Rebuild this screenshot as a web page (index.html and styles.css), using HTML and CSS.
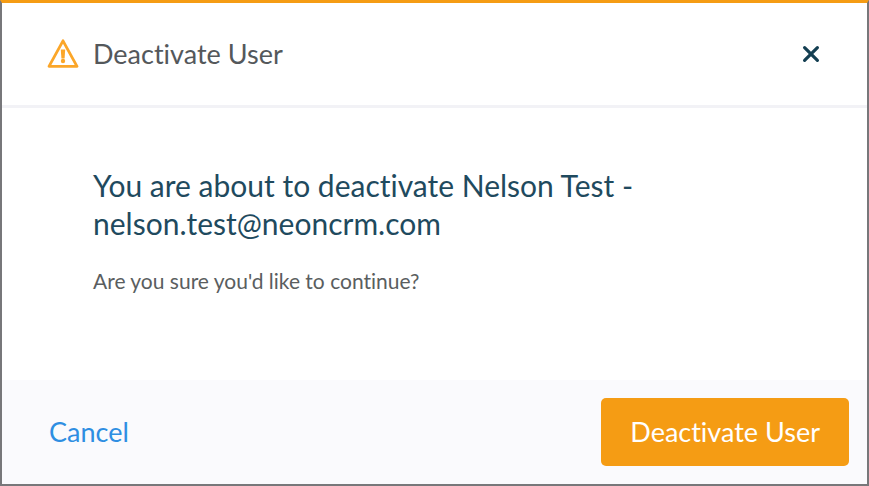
FILE: index.html
```html
<!DOCTYPE html>
<html lang="en">
<head>
<meta charset="utf-8">
<title>Deactivate User</title>
<link rel="stylesheet" href="styles.css">
</head>
<body>
<section class="dialog" role="dialog" aria-labelledby="title">
  <header class="header">
    <svg class="warning" viewBox="0 0 32 30" aria-hidden="true"><path d="M16 1.8 30 27.3H2Z" fill="none" stroke="#fba629" stroke-width="2.8" stroke-linejoin="round"/><path d="M13.8 10.5h4.4l-.6 9h-3.2Z" fill="#fba629"/><circle cx="16" cy="22" r="2.2" fill="#fba629"/></svg>
    <h1 class="title" id="title">Deactivate User</h1>
    <button class="close" type="button" aria-label="Close"><svg viewBox="0 0 18 18"><path d="M2.6 2.6l12.800 12.800M15.400 2.600L2.600 15.400" stroke="#143f52" stroke-width="3.2" stroke-linecap="round"/></svg></button>
  </header>
  <main class="body">
    <h2 class="message">You are about to deactivate Nelson Test - nelson.test@neoncrm.com</h2>
    <p class="question">Are you sure you'd like to continue?</p>
  </main>
  <footer class="footer">
    <button class="cancel" type="button">Cancel</button>
    <button class="confirm" type="button">Deactivate User</button>
  </footer>
</section>
</body>
</html>
```
FILE: styles.css
```css
* { box-sizing: border-box; }
body {
  margin: 0;
  font-family: Lato, "Liberation Sans", sans-serif;
  font-variant-ligatures: none;
}
.dialog {
  display: flex;
  flex-direction: column;
  min-height: 100vh;
  background: #fff;
  border: 2px solid #77777a;
  border-top: 3px solid #f59c14;
}
.header {
  display: flex;
  align-items: center;
  gap: 14px;
  padding: 31px 47px 31px 45px;
  border-bottom: 3px solid #f2f2f6;
}
.warning { width: 32px; height: 30px; }
.title { margin: 0; flex: 1; font-size: 27px; line-height: 40px; font-weight: 400; color: #54585b; }
.close { display: flex; padding: 0; border: 0; background: none; }
.close svg { width: 18px; height: 18px; }
.body { flex: 1; padding: 58px 91px 40px; }
.message { margin: 0; max-width: 560px; font-size: 30px; line-height: 38px; font-weight: 400; color: #1f4a5e; }
.question { margin: 24px 0 0; font-size: 21px; line-height: 30px; color: #5a5e60; }
.footer {
  display: flex;
  align-items: center;
  justify-content: space-between;
  padding: 18px 18px 18px 47px;
  background: #fafafd;
}
.cancel, .confirm { border: 0; font: inherit; font-variant-ligatures: none; font-size: 27px; line-height: 36px; }
.cancel { padding: 0; background: none; color: #2e8ee2; }
.confirm { padding: 16px 29px; border-radius: 5px; background: #f59c14; color: #fff; }
```
